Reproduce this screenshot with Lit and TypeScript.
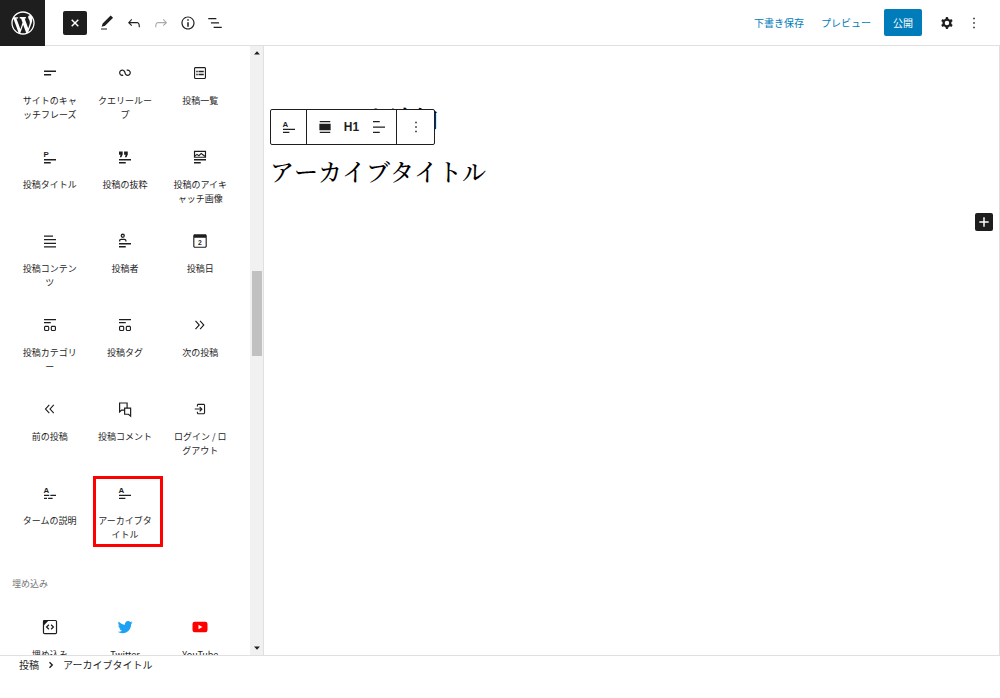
import { LitElement, html, svg, css, SVGTemplateResult } from "lit";
import { customElement, property } from "lit/decorators.js";

const path = (d: string) => svg`<path fill-rule="evenodd" d=${d}></path>`;
const twoLines = "M4 14.700h16v1.800H4zM4 18.700h9v1.800H4z";
const letter = (ch: string) =>
  svg`<text x="3.4" y="11.6" font-size="10.5" font-weight="700" font-family="'Liberation Sans', sans-serif">${ch}</text>`;

const icons: Record<string, SVGTemplateResult> = {
  edit: path("M20.1 5.1L16.9 2 6.2 12.7l-1.3 4.4 4.5-1.3L20.1 5.1zM4 20.8h8v-1.5H4v1.5z"),
  undo: path("M18.3 11.7c-.6-.6-1.4-.9-2.3-.9H6.7l2.9-3.3-1.1-1-4.5 5L8.5 16l1-1-2.7-2.7H16c.5 0 .9.2 1.3.5 1 1 1 3.4 1 4.5v.3h1.5v-.2c0-1.5 0-4.3-1.5-5.7z"),
  redo: path("M15.6 6.5l-1.1 1 2.9 3.3H8c-.9 0-1.7.3-2.3.9-1.4 1.5-1.4 4.2-1.4 5.6v.2h1.5v-.3c0-1.1 0-3.5 1-4.5.3-.3.7-.5 1.3-.5h9.2L14.5 15l1.1 1.1 4.6-4.6-4.6-5z"),
  info: path("M12 3.2c-4.8 0-8.8 3.9-8.8 8.8 0 4.8 3.9 8.8 8.8 8.8 4.8 0 8.8-3.9 8.8-8.8 0-4.8-4-8.8-8.8-8.8zm0 16c-4 0-7.2-3.3-7.2-7.2C4.8 8 8 4.8 12 4.8s7.2 3.3 7.2 7.2c0 4-3.2 7.2-7.2 7.2zM11 17h2v-6h-2v6zm0-8h2V7h-2v2z"),
  outline: path("M13.8 5.200H3v1.700H13.8zM10.200 17v1.700H21V17zM17.400 11.100H6.600v1.700h10.800z"),
  close: svg`<path d="M7.6 7.6l8.8 8.8M16.4 7.6l-8.8 8.8" stroke="currentColor" stroke-width="1.9"></path>`,
  plus: svg`<path d="M12 5v14M5 12h14" stroke="currentColor" stroke-width="2.2"></path>`,
  cog: path("M10.289 4.836A1 1 0 0111.275 4h1.306a1 1 0 01.987.836l.244 1.466c.787.26 1.503.679 2.108 1.218l1.393-.522a1 1 0 011.216.437l.653 1.13a1 1 0 01-.23 1.273l-1.148.944a6.025 6.025 0 010 2.435l1.149.946a1 1 0 01.23 1.272l-.653 1.13a1 1 0 01-1.216.437l-1.394-.522c-.605.54-1.32.958-2.108 1.218l-.244 1.466a1 1 0 01-.987.836h-1.306a1 1 0 01-.986-.836l-.244-1.466a5.995 5.995 0 01-2.108-1.218l-1.394.522a1 1 0 01-1.217-.436l-.653-1.131a1 1 0 01.23-1.272l1.149-.946a6.026 6.026 0 010-2.435l-1.148-.944a1 1 0 01-.23-1.272l.653-1.131a1 1 0 011.217-.437l1.393.522a5.994 5.994 0 012.108-1.218l.244-1.466zM14.929 12a3 3 0 11-6 0 3 3 0 016 0z"),
  more: path("M13 19h-2v-2h2v2zm0-6h-2v-2h2v2zm0-6h-2V5h2v2z"),
  tagline: path("M4 8.800h16v2H4zM4 13.300h9.500v2H4z"),
  loop: path("M18.1823 11.6392C18.1823 13.0804 17.0139 14.2487 15.5727 14.2487C14.3579 14.2487 13.335 13.4179 13.0453 12.2922L13.0377 12.2625L13.0278 12.2335L12.3985 10.377L12.3942 10.3785C11.8571 8.64997 10.246 7.39405 8.33961 7.39405C5.99509 7.39405 4.09448 9.29465 4.09448 11.6392C4.09448 13.9837 5.99509 15.8843 8.33961 15.8843C8.88499 15.8843 9.40822 15.781 9.88943 15.5923L9.29212 14.0697C8.99812 14.185 8.67729 14.2487 8.33961 14.2487C6.89838 14.2487 5.73003 13.0804 5.73003 11.6392C5.73003 10.1979 6.89838 9.02959 8.33961 9.02959C9.55444 9.02959 10.5773 9.86046 10.867 10.9862L10.8772 10.9836L11.4695 12.7311C11.9515 14.546 13.6048 15.8843 15.5727 15.8843C17.9172 15.8843 19.8178 13.9837 19.8178 11.6392C19.8178 9.29465 17.9172 7.39404 15.5727 7.39404C15.0287 7.39404 14.5066 7.4968 14.0264 7.6847L14.6223 9.20781C14.9158 9.093 15.2358 9.02959 15.5727 9.02959C17.0139 9.02959 18.1823 10.1979 18.1823 11.6392Z"),
  list: path("M18 4H6c-1.1 0-2 .9-2 2v12c0 1.1.9 2 2 2h12c1.1 0 2-.9 2-2V6c0-1.1-.9-2-2-2zm.5 14c0 .3-.2.5-.5.5H6c-.3 0-.5-.2-.5-.5V6c0-.3.2-.5.5-.5h12c.3 0 .5.2.5.5v12zM7 11h2V9H7v2zm0 4h2v-2H7v2zm3-4h7V9h-7v2zm0 4h7v-2h-7v2z"),
  title: svg`${letter("P")}${path(twoLines)}`,
  archive: svg`${letter("A")}${path("M4 14.300h16v1.800H4zM4 18.300h8.500v1.800H4z")}`,
  term: svg`${letter("A")}${path("M4 14.300h7v1.800H4zM12.500 14.300H20v1.800h-7.500zM4 18.300h4v1.800H4zM9.500 18.300h6v1.800h-6z")}`,
  excerpt: path("M4 4.500h4.900v4.200L7.200 12.300H5l1.100-3.300H4zM10.800 4.500h4.900v4.200L14 12.300h-2.200L12.900 9h-2.100z" + twoLines),
  image: svg`<path d="M4.700 4.500h14.600v7.800H4.700z" fill="none" stroke="currentColor" stroke-width="1.600"></path>
    <path d="M5 10.800l3-2.300 2.600 1.800 3-3 5.400 4" fill="none" stroke="currentColor" stroke-width="1.500"></path>${path(twoLines)}`,
  content: path("M4 4.500h12v1.700H4zM4 9.300h16V11H4zM4 14.300h16V16H4zM4 19.100h16v1.700H4z"),
  author: svg`<circle cx="9" cy="5" r="2" fill="none" stroke="currentColor" stroke-width="1.700"></circle>
    <path d="M4.800 12.700v-1c0-1.200.8-2 2-2h4.400c1.200 0 2 .8 2 2v1" fill="none" stroke="currentColor" stroke-width="1.700"></path>${path(twoLines)}`,
  date: svg`<path fill-rule="evenodd" d="M5 3h14c1.100 0 2 .9 2 2v14c0 1.100-.9 2-2 2H5c-1.100 0-2-.9-2-2V5c0-1.100.9-2 2-2zM4.500 7.500v11.300c0 .4.300.7.700.7h13.600c.4 0 .7-.3.7-.7V7.500z"></path>
    <text x="12" y="17" font-size="9" font-weight="700" text-anchor="middle" font-family="'Liberation Sans', sans-serif">2</text>`,
  terms: path("M20 4H4v1.5h16V4zm-2 9h-3c-1.1 0-2 .9-2 2v3c0 1.1.9 2 2 2h3c1.1 0 2-.9 2-2v-3c0-1.1-.9-2-2-2zm.5 5c0 .3-.2.5-.5.5h-3c-.3 0-.5-.2-.5-.5v-3c0-.3.2-.5.5-.5h3c.3 0 .5.2.5.5v3zM4 9.5h9V8H4v1.5zM9 13H6c-1.1 0-2 .9-2 2v3c0 1.1.9 2 2 2h3c1.1 0 2-.9 2-2v-3c0-1.1-.9-2-2-2zm.5 5c0 .3-.2.5-.5.5H6c-.3 0-.5-.2-.5-.5v-3c0-.3.2-.5.5-.5h3c.3 0 .5.2.5.5v3z"),
  next: path("M6.6 6L5.4 7l4.5 5-4.5 5 1.1 1 5.5-6-5.4-6zm6 0l-1.1 1 4.5 5-4.5 5 1.1 1 5.5-6-5.5-6z"),
  previous: path("M11.6 7l-1.1-1L5 12l5.500 6 1.100-1L7 12l4.600-5zm6 0l-1.100-1-5.500 6 5.500 6 1.100-1-4.600-5 4.600-5z"),
  comments: svg`<path d="M11.500 13.500H7.500L4.800 16V4h10v6M11.500 10.800h8v10.700l-2.800-2.500h-5.200z" fill="none" stroke="currentColor" stroke-width="1.600"></path>`,
  login: path("M11 14.5l1.1 1.1 3-3 .5-.5-.6-.6-3-3-1 1 1.7 1.7H5v1.5h7.7L11 14.5zM16.8 5h-7c-1.1 0-2 .9-2 2v1.5h1.5V7c0-.3.2-.5.5-.5h7c.3 0 .5.2.5.5v10c0 .3-.2.5-.5.5h-7c-.3 0-.5-.2-.5-.5v-1.5H7.8V17c0 1.1.9 2 2 2h7c1.1 0 2-.9 2-2V7c0-1.1-.9-2-2-2z"),
  embed: svg`<rect x="3.300" y="3.300" width="17.400" height="17.400" rx="1.500" fill="none" stroke="currentColor" stroke-width="1.600"></rect>
    <path d="M3 3h7.500L3 10.500z"></path>
    <path d="M10.500 9l-3 3 3 3M13.500 9l3 3-3 3" fill="none" stroke="currentColor" stroke-width="1.700"></path>`,
  twitter: svg`<path fill="#1da1f2" d="M22.23 5.924c-.736.326-1.527.547-2.357.646.847-.508 1.498-1.312 1.804-2.27-.793.47-1.67.812-2.606.996C18.325 4.498 17.258 4 16.078 4c-2.266 0-4.103 1.837-4.103 4.103 0 .322.036.635.106.935-3.41-.17-6.433-1.804-8.457-4.287-.353.607-.556 1.312-.556 2.064 0 1.424.724 2.68 1.825 3.415-.673-.022-1.305-.207-1.86-.514v.052c0 1.988 1.415 3.647 3.293 4.023-.344.095-.707.145-1.08.145-.265 0-.522-.026-.773-.074.522 1.63 2.038 2.817 3.833 2.85-1.404 1.1-3.174 1.757-5.096 1.757-.332 0-.66-.02-.98-.057 1.816 1.164 3.973 1.843 6.29 1.843 7.547 0 11.675-6.252 11.675-11.675 0-.178-.004-.355-.012-.53.802-.578 1.497-1.3 2.047-2.124z"></path>`,
  youtube: svg`<rect x="2" y="5" width="20" height="14" rx="3" fill="#f00"></rect><path d="M10 9l5.200 3-5.200 3z" fill="#fff"></path>`,
  full: path("M5 4h14v1.600H5zM4.500 7.800h15v8.400h-15zM5 18.400h14V20H5z"),
  left: path("M4 4h9v1.700H4zM4 11.200h16v1.700H4zM4 18.300h9V20H4z"),
  chevron: svg`<path d="M9 6.500l5.500 5.500L9 17.500" fill="none" stroke="currentColor" stroke-width="2.800"></path>`,
  up: path("M12 9l5 5.500H7z"),
  down: path("M12 15l-5-5.500h10z"),
  wordpress: svg`<path transform="translate(2 2)" d="M20 10c0-5.51-4.49-10-10-10C4.48 0 0 4.49 0 10c0 5.52 4.48 10 10 10 5.51 0 10-4.48 10-10zM7.78 15.37L4.37 6.22c.55-.02 1.17-.08 1.17-.08.5-.06.44-1.13-.06-1.11 0 0-1.45.11-2.37.11-.18 0-.37 0-.58-.01C4.12 2.69 6.87 1.11 10 1.11c2.33 0 4.45.87 6.05 2.34-.68-.11-1.65.39-1.65 1.58 0 .74.45 1.36.9 2.1.35.61.55 1.36.55 2.46 0 1.49-1.4 5-1.4 5l-3.03-8.37c.54-.02.82-.17.82-.17.5-.05.44-1.25-.06-1.22 0 0-1.44.12-2.38.12-.87 0-2.33-.12-2.33-.12-.5-.03-.56 1.2-.06 1.22l.92.08 1.26 3.41zM17.41 10c.24-.64.74-1.87.43-4.25.7 1.29 1.05 2.71 1.05 4.25 0 3.29-1.73 6.24-4.4 7.78.97-2.59 1.94-5.2 2.92-7.78zM6.1 18.09C3.12 16.65 1.11 13.53 1.11 10c0-1.3.23-2.48.72-3.59C3.25 10.3 4.67 14.2 6.1 18.09zm4.03-6.63l2.58 6.98c-.86.29-1.76.45-2.71.45-.79 0-1.57-.11-2.29-.33.81-2.38 1.62-4.74 2.42-7.1z"></path>`,
};

@customElement("ui-icon")
class UiIcon extends LitElement {
  @property() name = "";
  static styles = css`
    :host { display: block; width: 18px; height: 18px; flex: none; }
    .glyph { display: block; width: 100%; height: 100%; fill: currentColor; }
  `;
  render() {
    return html`<svg class="glyph" viewBox="0 0 24 24" aria-hidden="true">${icons[this.name]}</svg>`;
  }
}

type Block = [icon: string, label: string, marked?: boolean];

const themeBlocks: Block[] = [
  ["tagline", "サイトのキャッチフレーズ"],
  ["loop", "クエリーループ"],
  ["list", "投稿一覧"],
  ["title", "投稿タイトル"],
  ["excerpt", "投稿の抜粋"],
  ["image", "投稿のアイキャッチ画像"],
  ["content", "投稿コンテンツ"],
  ["author", "投稿者"],
  ["date", "投稿日"],
  ["terms", "投稿カテゴリー"],
  ["terms", "投稿タグ"],
  ["next", "次の投稿"],
  ["previous", "前の投稿"],
  ["comments", "投稿コメント"],
  ["login", "ログイン / ログアウト"],
  ["term", "タームの説明"],
  ["archive", "アーカイブタイトル", true],
];

const embedBlocks: Block[] = [
  ["embed", "埋め込み"],
  ["twitter", "Twitter"],
  ["youtube", "YouTube"],
];

@customElement("app-root")
class AppRoot extends LitElement {
  static styles = css`
    :host {
      display: flex;
      flex-direction: column;
      height: 100vh;
      box-sizing: border-box;
      padding-bottom: 24px;
      background: #fff;
      color: #1e1e1e;
      font: 10px/14px "Noto Sans CJK JP", "Noto Sans", sans-serif;
    }
    button {
      display: flex;
      align-items: center;
      justify-content: center;
      margin: 0;
      padding: 0;
      border: 0;
      background: none;
      color: inherit;
      font: inherit;
      cursor: pointer;
    }
    .header {
      display: flex;
      align-items: center;
      height: 45px;
      flex: none;
      border-bottom: 1px solid #e0e0e0;
    }
    .logo {
      display: flex;
      align-items: center;
      justify-content: center;
      width: 45px;
      height: 46px;
      margin-bottom: -1px;
      background: #1e1e1e;
      color: #fff;
    }
    .logo ui-icon { width: 28px; height: 28px; }
    .tools { display: flex; gap: 3px; padding-left: 18px; }
    .tool { width: 24px; height: 24px; }
    .tool[disabled] { color: #aaa; }
    .toggle { margin-right: 5px; border-radius: 2px; background: #1e1e1e; color: #fff; }
    .actions {
      display: flex;
      align-items: center;
      gap: 13px;
      margin-left: auto;
      padding-right: 14px;
    }
    .link { color: #007cba; }
    .link + .link { margin-left: 4px; }
    .publish {
      height: 27px;
      padding: 0 9px;
      border-radius: 2px;
      background: #007cba;
      color: #fff;
    }
    .menu { display: flex; gap: 3px; }
    .body { display: flex; flex: 1; min-height: 0; }
    .inserter { width: 250px; flex: none; overflow: hidden; }
    .grid {
      display: grid;
      grid-template-columns: repeat(3, 1fr);
      grid-auto-rows: 84px;
      padding: 12px 12px 0;
    }
    .block {
      position: relative;
      flex-direction: column;
      justify-content: flex-start;
      width: 100%;
      height: 100%;
      padding: 6px 9px 0;
      gap: 12px;
      font-size: 9px;
    }
    .block-label { word-break: break-all; line-break: anywhere; }
    .marked::after {
      content: "";
      position: absolute;
      left: 6px;
      top: -2px;
      width: 64px;
      height: 65px;
      border: 3px solid #f00;
    }
    .category {
      margin: 0;
      padding: 15px 12px 9px;
      color: #757575;
      font-size: 9px;
      font-weight: 400;
    }
    .scrollbar {
      display: flex;
      flex-direction: column;
      align-items: center;
      justify-content: space-between;
      width: 13px;
      flex: none;
      background: #f1f1f1;
    }
    .scrollbar ui-icon { width: 14px; height: 14px; }
    .track { flex: 1; display: flex; flex-direction: column; }
    .before { flex: 211; }
    .thumb { width: 10px; flex: 85; background: #c1c1c1; }
    .after { flex: 286; }
    .canvas {
      position: relative;
      flex: 1;
      min-width: 0;
      padding: 54px 6px 0;
      border: solid #e0e0e0;
      border-width: 0 1px;
    }
    .heading {
      margin: 0 0 17px;
      font: 500 24px/36px "Noto Serif CJK JP", "Noto Serif JP", "Liberation Serif", "Noto Sans CJK JP", serif;
      font-kerning: none;
      color: #000;
    }
    .toolbar {
      position: absolute;
      left: 6px;
      top: 63px;
      display: flex;
      height: 34px;
      border: 1px solid #1e1e1e;
      border-radius: 2px;
      background: #fff;
    }
    .group { display: flex; padding: 0 4px; }
    .group + .group { border-left: 1px solid #1e1e1e; }
    .group:last-child { padding: 0 5px; }
    .group .tool { width: 27px; height: 34px; }
    .level { font: 700 12px/18px "Liberation Sans", sans-serif; }
    .appender { display: flex; justify-content: flex-end; padding-top: 7px; }
    .add { width: 18px; height: 18px; border-radius: 2px; background: #1e1e1e; color: #fff; }
    .add ui-icon { width: 16px; height: 16px; }
    .footer {
      display: flex;
      align-items: center;
      height: 18px;
      flex: none;
      gap: 6px;
      padding-left: 19px;
      border-top: 1px solid #e0e0e0;
    }
    .footer ui-icon { width: 12px; height: 12px; }
  `;

  private tool(icon: string, label: string, extra = "", disabled = false) {
    return html`<button class="tool ${extra}" aria-label=${label} ?disabled=${disabled}><ui-icon name=${icon}></ui-icon></button>`;
  }

  private blocks(list: Block[]) {
    return html`<div class="grid">
      ${list.map(
        ([icon, label, marked]) => html`<button class="block ${marked ? "marked" : ""}">
          <ui-icon name=${icon}></ui-icon><span class="block-label">${label}</span>
        </button>`
      )}
    </div>`;
  }

  render() {
    return html`
      <header class="header">
        <a class="logo" href="#" aria-label="WordPress"><ui-icon name="wordpress"></ui-icon></a>
        <div class="tools">
          ${this.tool("close", "閉じる", "toggle")}
          ${this.tool("edit", "ツール")}
          ${this.tool("undo", "元に戻す")}
          ${this.tool("redo", "やり直す", "", true)}
          ${this.tool("info", "詳細")}
          ${this.tool("outline", "リスト表示")}
        </div>
        <div class="actions">
          <button class="link">下書き保存</button>
          <button class="link">プレビュー</button>
          <button class="publish">公開</button>
          <div class="menu">${this.tool("cog", "設定")}${this.tool("more", "オプション")}</div>
        </div>
      </header>
      <div class="body">
        <aside class="inserter">
          ${this.blocks(themeBlocks)}
          <h2 class="category">埋め込み</h2>
          ${this.blocks(embedBlocks)}
        </aside>
        <div class="scrollbar">
          <ui-icon name="up"></ui-icon>
          <div class="track"><div class="before"></div><div class="thumb"></div><div class="after"></div></div>
          <ui-icon name="down"></ui-icon>
        </div>
        <main class="canvas">
          <h1 class="heading">タイトルを追加</h1>
          <h1 class="heading">アーカイブタイトル</h1>
          <div class="appender"><button class="add" aria-label="ブロックを追加"><ui-icon name="plus"></ui-icon></button></div>
          <div class="toolbar">
            <div class="group">${this.tool("archive", "アーカイブタイトル")}</div>
            <div class="group">
              ${this.tool("full", "配置")}
              <button class="tool level">H1</button>
              ${this.tool("left", "テキストの配置")}
            </div>
            <div class="group">${this.tool("more", "オプション")}</div>
          </div>
        </main>
      </div>
      <footer class="footer">
        <span>投稿</span><ui-icon name="chevron"></ui-icon><span>アーカイブタイトル</span>
      </footer>
    `;
  }
}
